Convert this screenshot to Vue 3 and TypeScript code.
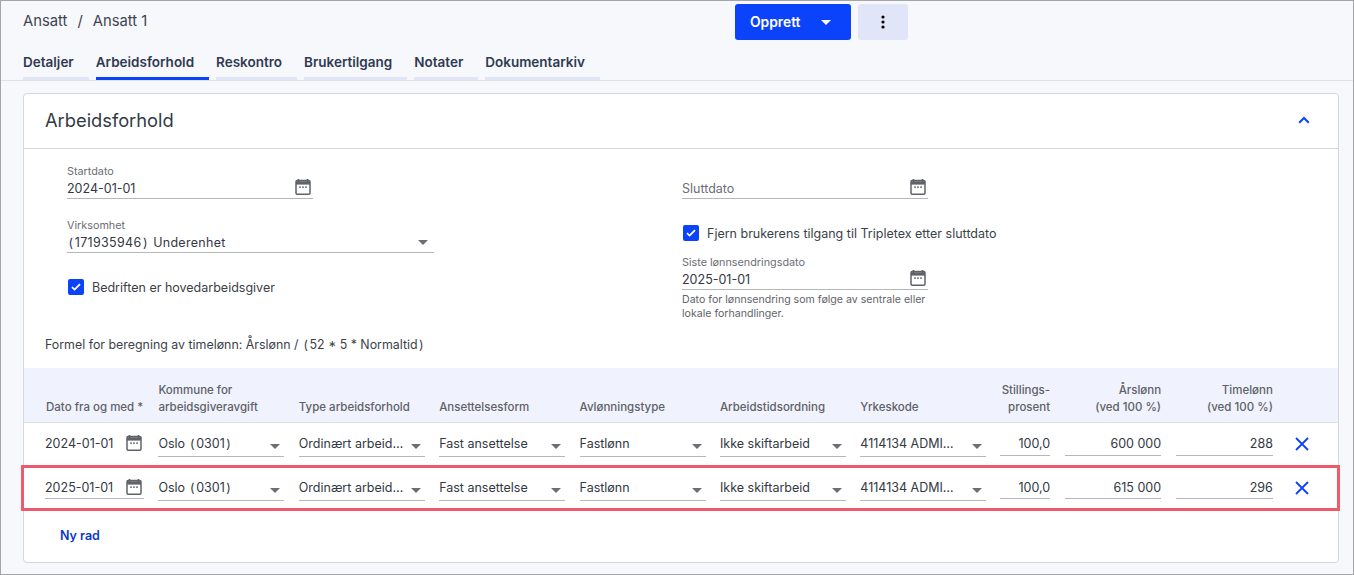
<script setup lang="ts">
interface Row {
  date: string
  salary: string
  hourly: string
  highlight: boolean
}

const tabs = ['Detaljer', 'Arbeidsforhold', 'Reskontro', 'Brukertilgang', 'Notater', 'Dokumentarkiv']
const activeTab = 'Arbeidsforhold'

const rows: Row[] = [
  { date: '2024-01-01', salary: '600 000', hourly: '288', highlight: false },
  { date: '2025-01-01', salary: '615 000', hourly: '296', highlight: true },
]

const selects = ['Ordinært arbeid…', 'Fast ansettelse', 'Fastlønn', 'Ikke skiftarbeid', '4114134 ADMI…']
</script>

<template>
  <div class="page">
    <header class="topbar">
      <div class="crumbs">
        <span>Ansatt</span>
        <span class="slash">/</span>
        <span>Ansatt 1</span>
      </div>
      <div class="actions">
        <button class="create">
          Opprett
          <i class="caret white"></i>
        </button>
        <button class="more" aria-label="Mer">
          <svg width="4" height="14" viewBox="0 0 4 14"><circle cx="2" cy="2" r="1.6" /><circle cx="2" cy="7" r="1.6" /><circle cx="2" cy="12" r="1.6" /></svg>
        </button>
      </div>
    </header>

    <nav class="tabs">
      <a v-for="tab in tabs" :key="tab" :class="['tab', { active: tab === activeTab }]">{{ tab }}</a>
    </nav>

    <section class="card">
      <div class="card-head">
        <h2>Arbeidsforhold</h2>
        <svg class="chevron" width="12" height="8" viewBox="0 0 12 8"><path d="M1.2 6.8 6 2l4.8 4.8" fill="none" stroke="#0b43fb" stroke-width="2" /></svg>
      </div>

      <div class="form">
        <div class="col col-left">
          <div class="field date-field">
            <label>Startdato</label>
            <div class="value">
              <span>2024-01-01</span>
              <svg class="cal" width="16" height="18" viewBox="0 0 16 18"><path d="M3.5 1v3M12.5 1v3" stroke="#5f6368" stroke-width="1.6" /><rect x="1" y="2.6" width="14" height="13.6" rx="1.2" fill="none" stroke="#5f6368" stroke-width="1.5" /><path d="M1 3.2h14v3.4H1z" fill="#5f6368" /><path d="M4 9.2h2M7 9.2h2M10 9.2h2" stroke="#5f6368" stroke-width="1.3" /></svg>
            </div>
          </div>
          <div class="field wide">
            <label>Virksomhet</label>
            <div class="value">
              <span class="company"><span class="paren">(</span>171935946<span class="paren">)</span> Underenhet</span>
              <i class="caret"></i>
            </div>
          </div>
          <label class="check main-employer">
            <span class="box"><svg width="10" height="8" viewBox="0 0 10 8"><path d="M1 4.2 3.6 6.6 9 1.2" fill="none" stroke="#fff" stroke-width="1.8" /></svg></span>
            Bedriften er hovedarbeidsgiver
          </label>
        </div>

        <div class="col col-right">
          <div class="field date-field">
            <div class="value empty">
              <span>Sluttdato</span>
              <svg class="cal" width="16" height="18" viewBox="0 0 16 18"><path d="M3.5 1v3M12.5 1v3" stroke="#5f6368" stroke-width="1.6" /><rect x="1" y="2.6" width="14" height="13.6" rx="1.2" fill="none" stroke="#5f6368" stroke-width="1.5" /><path d="M1 3.2h14v3.4H1z" fill="#5f6368" /><path d="M4 9.2h2M7 9.2h2M10 9.2h2" stroke="#5f6368" stroke-width="1.3" /></svg>
            </div>
          </div>
          <label class="check revoke">
            <span class="box"><svg width="10" height="8" viewBox="0 0 10 8"><path d="M1 4.2 3.6 6.6 9 1.2" fill="none" stroke="#fff" stroke-width="1.8" /></svg></span>
            Fjern brukerens tilgang til Tripletex etter sluttdato
          </label>
          <div class="field date-field last-change">
            <label>Siste lønnsendringsdato</label>
            <div class="value">
              <span>2025-01-01</span>
              <svg class="cal" width="16" height="18" viewBox="0 0 16 18"><path d="M3.5 1v3M12.5 1v3" stroke="#5f6368" stroke-width="1.6" /><rect x="1" y="2.6" width="14" height="13.6" rx="1.2" fill="none" stroke="#5f6368" stroke-width="1.5" /><path d="M1 3.2h14v3.4H1z" fill="#5f6368" /><path d="M4 9.2h2M7 9.2h2M10 9.2h2" stroke="#5f6368" stroke-width="1.3" /></svg>
            </div>
            <p class="help">Dato for lønnsendring som følge av sentrale eller lokale forhandlinger.</p>
          </div>
        </div>
      </div>

      <p class="formula">Formel for beregning av timelønn: Årslønn / <span class="paren">(</span>52 * 5 * Normaltid<span class="paren">)</span></p>

      <div class="table">
        <div class="grid head">
          <div class="date-head">Dato fra og med *</div>
          <div>Kommune for<br />arbeidsgiveravgift</div>
          <div>Type arbeidsforhold</div>
          <div>Ansettelsesform</div>
          <div>Avlønningstype</div>
          <div>Arbeidstidsordning</div>
          <div>Yrkeskode</div>
          <div class="right stilling">Stillings-<br />prosent</div>
          <div class="right">Årslønn<br />(ved 100 %)</div>
          <div class="right">Timelønn<br />(ved 100 %)</div>
          <div></div>
        </div>

        <div v-for="row in rows" :key="row.date" :class="['grid', 'row', { marked: row.highlight }]">
          <div :class="['cell', 'short', 'date-cell', { lined: row.highlight }]">
            <span>{{ row.date }}</span>
            <svg class="cal" width="16" height="18" viewBox="0 0 16 18"><path d="M3.5 1v3M12.5 1v3" stroke="#5f6368" stroke-width="1.6" /><rect x="1" y="2.6" width="14" height="13.6" rx="1.2" fill="none" stroke="#5f6368" stroke-width="1.5" /><path d="M1 3.2h14v3.4H1z" fill="#5f6368" /><path d="M4 9.2h2M7 9.2h2M10 9.2h2" stroke="#5f6368" stroke-width="1.3" /></svg>
          </div>
          <div class="cell lined select">
            <span>Oslo <span class="paren">(</span>0301<span class="paren">)</span></span>
            <i class="caret"></i>
          </div>
          <div v-for="item in selects" :key="item" class="cell lined select">
            <span>{{ item }}</span>
            <i class="caret"></i>
          </div>
          <div class="cell short lined right">100,0</div>
          <div class="cell short lined right">{{ row.salary }}</div>
          <div class="cell short lined right">{{ row.hourly }}</div>
          <div class="remove">
            <svg width="14" height="14" viewBox="0 0 14 14"><path d="M1 1l12 12M13 1 1 13" stroke="#0b43fb" stroke-width="1.8" fill="none" /></svg>
          </div>
        </div>

        <a class="new-row">Ny rad</a>
      </div>
    </section>
  </div>
</template>

<style>
html,
body {
  margin: 0;
  background: #f7f8fc;
}
</style>

<style scoped>
.page {
  box-sizing: border-box;
  width: 1354px;
  height: 575px;
  overflow: hidden;
  border: 1px solid #a3a5ab;
  background: #f7f8fc;
  font-family: Inter, "Noto Sans", sans-serif;
  font-size: 12.5px;
  color: #2f3542;
}

.paren {
  padding: 0 1.5px;
}

.topbar {
  display: flex;
  height: 40px;
  padding: 3px 0 0 22px;
}

.crumbs {
  display: flex;
  gap: 10px;
  width: 712px;
  padding-top: 8px;
  font-size: 14.8px;
  color: #3d4350;
}

.actions {
  display: flex;
  gap: 7px;
}

.create {
  display: flex;
  align-items: center;
  justify-content: space-between;
  box-sizing: border-box;
  width: 116px;
  height: 36px;
  padding: 0 20px 0 15px;
  border: 0;
  border-radius: 3px;
  background: #0b43fb;
  color: #fff;
  font: 600 13.8px Inter, sans-serif;
}

.more {
  display: flex;
  align-items: center;
  justify-content: center;
  width: 50px;
  height: 36px;
  padding: 0;
  border: 0;
  border-radius: 3px;
  background: #e0e6f8;
}

.tabs {
  display: flex;
  gap: 7px;
  height: 36px;
  padding-left: 22px;
  border-bottom: 1px solid #e0e2e6;
}

.tab {
  box-sizing: border-box;
  height: 36px;
  padding-top: 10px;
  padding-right: 15px;
  border-bottom: 3px solid #e0e6f8;
  font-size: 13.5px;
  font-weight: 600;
  color: #2f3a52;
}

.tab.active {
  border-bottom-color: #0b43fb;
}

.card {
  box-sizing: border-box;
  height: 470px;
  margin: 12px 14px 0 22px;
  border: 1px solid #d5d8dc;
  border-radius: 4px;
  background: #fff;
}

.card-head {
  display: flex;
  align-items: center;
  justify-content: space-between;
  height: 54px;
  padding: 0 28px 0 21px;
  border-bottom: 1px solid #d5d8dc;
}

.card-head h2 {
  margin: -2px 0 0;
  font-size: 18.3px;
  font-weight: 400;
  color: #333a47;
}

.chevron {
  margin-top: -2px;
}

.form {
  display: flex;
  height: 164px;
  padding: 16px 0 0 43px;
}

.col-left {
  width: 615px;
}

.field label {
  display: block;
  height: 14px;
  font-size: 10.8px;
  line-height: 14px;
  color: #6b6e75;
}

.date-field {
  width: 246px;
}

.value {
  display: flex;
  align-items: center;
  justify-content: space-between;
  box-sizing: border-box;
  height: 20px;
  border-bottom: 1px solid #b5b7bb;
  color: #333842;
}

.value.empty {
  margin-top: 14px;
  color: #6b6e75;
}

.cal {
  flex: none;
  margin: -4px 2px 0 0;
}

.wide {
  width: 367px;
  margin-top: 20px;
}

.wide .caret {
  margin-right: 6px;
}

.company {
  letter-spacing: 0.3px;
}

.check {
  display: flex;
  align-items: center;
  gap: 8px;
  color: #3b3f48;
}

.box {
  display: flex;
  align-items: center;
  justify-content: center;
  width: 16px;
  height: 16px;
  border-radius: 2px;
  background: #0b43fb;
}

.main-employer {
  margin: 26px 0 0 1px;
}

.revoke {
  margin: 26px 0 0 1px;
}

.last-change {
  margin-top: 15px;
}

.help {
  width: 250px;
  margin: 3px 0 0;
  font-size: 10.6px;
  line-height: 14px;
  color: #5f636b;
}

.formula {
  height: 16px;
  margin: 0;
  padding: 8px 0 0 21px;
  font-size: 12.4px;
  line-height: 16px;
  color: #3b3f48;
}

.table {
  margin-top: 15px;
}

.grid {
  display: grid;
  grid-template-columns: 99px 126px 126px 126px 126px 126px 125.4px 50px 96.6px 97.4px 35px;
  column-gap: 14.4px;
  padding-left: 21px;
}

.head {
  align-items: end;
  box-sizing: border-box;
  height: 55px;
  padding-bottom: 6px;
  border-bottom: 1px solid #dfe1e6;
  background: #f0f3fd;
  font-size: 11.5px;
  font-weight: 500;
  line-height: 17px;
  color: #5e6168;
}

.date-head {
  padding-left: 1px;
  white-space: nowrap;
}

.right {
  text-align: right;
}

.stilling {
  white-space: nowrap;
}

.row {
  align-items: end;
  box-sizing: border-box;
  height: 42px;
  padding-bottom: 8px;
}

.row.marked {
  height: 46px;
  margin: 0 -2px 0 -3px;
  padding-bottom: 7px;
  padding-left: 21px;
  border: 3px solid #ee5b6b;
}

.cell {
  box-sizing: border-box;
  height: 22px;
  line-height: 17px;
  color: #333842;
  white-space: nowrap;
}

.short {
  height: 21px;
  margin-bottom: 1px;
}

.marked .short {
  height: 20px;
  margin-bottom: 2px;
}

.lined {
  border-bottom: 1px solid #b5b7bb;
}

.date-cell {
  display: flex;
  justify-content: space-between;
}

.date-cell .cal {
  margin: -1px 2px 0 0;
}

.select {
  display: flex;
  align-items: flex-start;
  justify-content: space-between;
}

.select .caret {
  margin: 9px 4px 0 0;
}

.caret {
  display: block;
  flex: none;
  width: 0;
  height: 0;
  border-left: 5px solid transparent;
  border-right: 5px solid transparent;
  border-top: 5px solid #6b6e75;
}

.caret.white {
  border-top-color: #fff;
}

.remove {
  display: flex;
  margin-bottom: 6px;
  padding-left: 8px;
}

.new-row {
  display: block;
  padding: 17px 0 0 36px;
  font-size: 12.5px;
  font-weight: 600;
  color: #0b37c8;
}
</style>
